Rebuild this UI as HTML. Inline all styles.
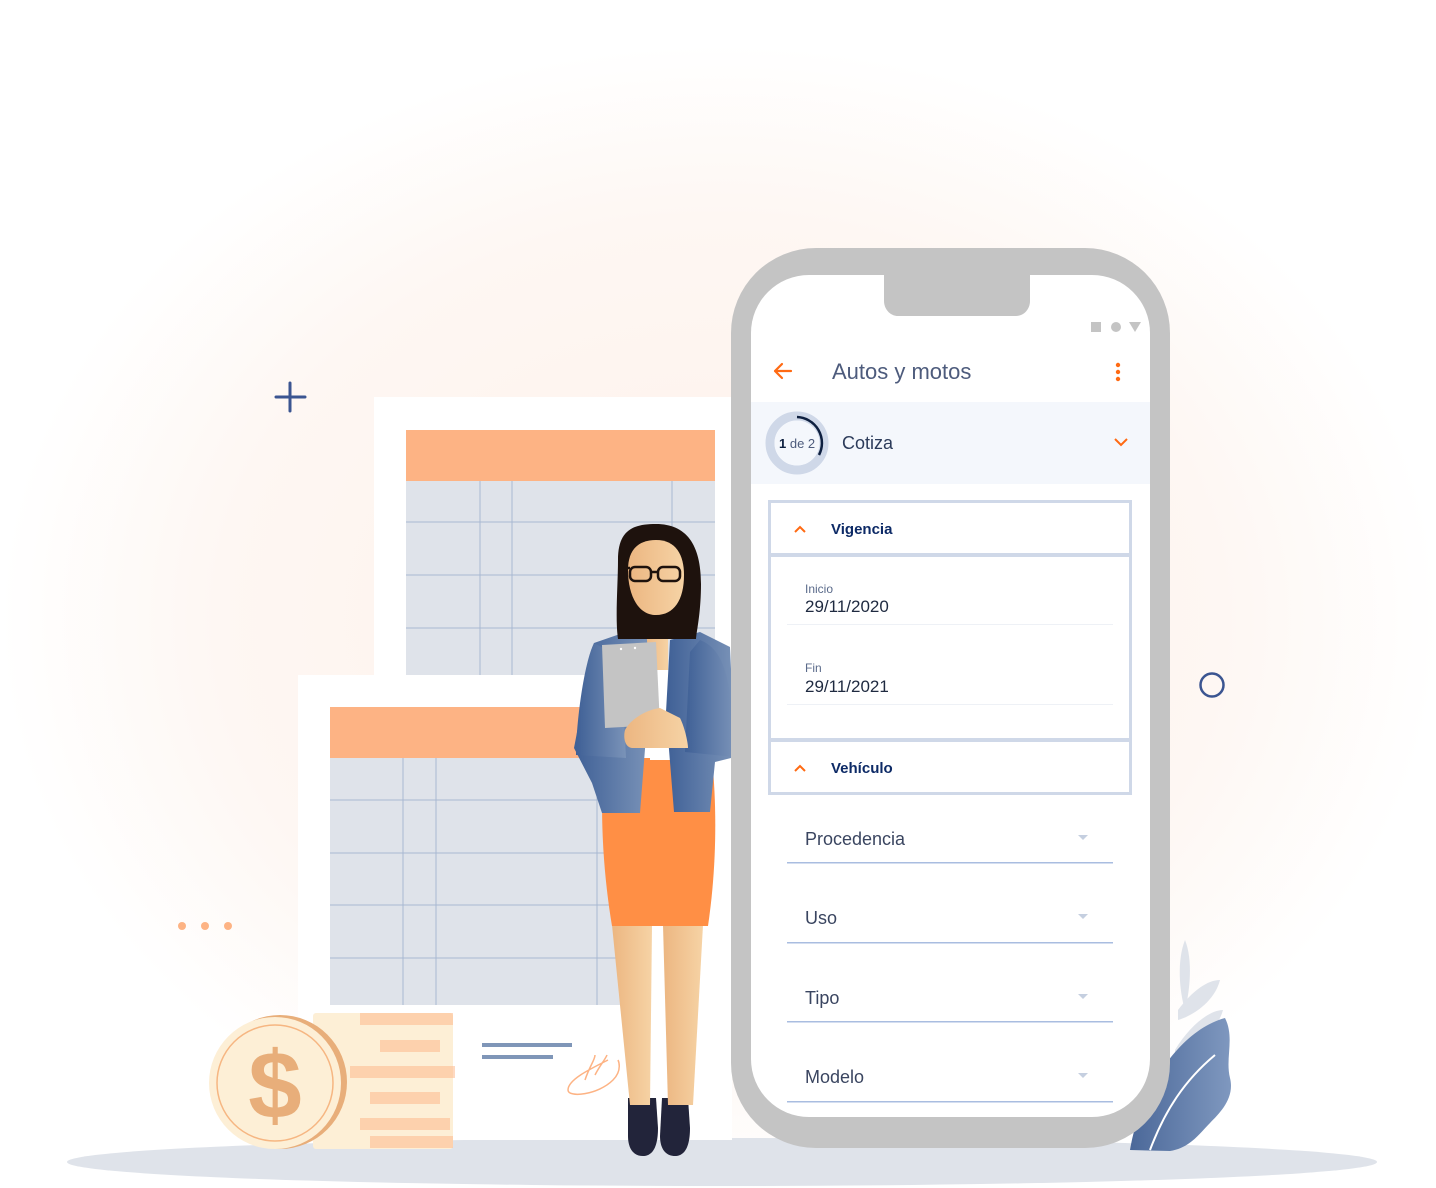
<!DOCTYPE html>
<html><head><meta charset="utf-8"><style>
html,body{margin:0;padding:0;width:1436px;height:1188px;overflow:hidden;background:#fff}
svg{display:block}
text{font-family:"Liberation Sans",sans-serif}
</style></head><body>
<svg width="1436" height="1188" viewBox="0 0 1436 1188" xmlns="http://www.w3.org/2000/svg">
<defs>
<radialGradient id="bg" cx="720" cy="620" r="720" gradientUnits="userSpaceOnUse" gradientTransform="translate(720 620) scale(1 0.8) translate(-720 -620)">
<stop offset="0" stop-color="#fdf1ea"/><stop offset="0.7" stop-color="#fef7f3"/><stop offset="1" stop-color="#ffffff"/></radialGradient>
<linearGradient id="jk" x1="0" x2="1"><stop offset="0" stop-color="#3f6096"/><stop offset="1" stop-color="#7a93b8"/></linearGradient>
<linearGradient id="sk" x1="0" x2="1"><stop offset="0" stop-color="#ecb681"/><stop offset="1" stop-color="#f6d3a5"/></linearGradient>
<linearGradient id="lf" x1="0" x2="1"><stop offset="0" stop-color="#4b6899"/><stop offset="1" stop-color="#7f98bf"/></linearGradient>
</defs>
<rect width="1436" height="1188" fill="url(#bg)"/>
<!-- ground -->
<ellipse cx="722" cy="1162" rx="655" ry="24" fill="#dfe3ea"/>
<!-- decorations -->
<path d="M276 397H305M290 383V411" stroke="#3b5591" stroke-width="3" stroke-linecap="round"/>
<circle cx="1212" cy="685" r="11.5" fill="none" stroke="#3b5591" stroke-width="2.5"/>
<circle cx="182" cy="926" r="4" fill="#fdb384"/><circle cx="205" cy="926" r="4" fill="#fdb384"/><circle cx="228" cy="926" r="4" fill="#fdb384"/>
<!-- leaves -->
<path d="M1185 940c-8 20-6 50 0 70c5-20 8-50 0-70z" fill="#dfe3ea"/>
<path d="M1178 1010c15-20 30-30 42-30c-5 20-25 35-42 40z" fill="#dfe3ea"/>
<path d="M1175 1050c15-25 35-40 48-40c-5 20-30 40-48 48z" fill="#dfe3ea"/>
<path d="M1130 1150c10-60 50-120 95-132c10 20 0 40 5 60c5 20-10 35-20 45c-10 10-20 25-40 28z" fill="url(#lf)"/>
<path d="M1150 1150c15-40 35-70 65-95" stroke="#fff" stroke-width="2" fill="none"/>
<!-- back doc -->
<rect x="374" y="397" width="357" height="278" fill="#fff"/>
<rect x="406" y="430" width="309" height="51" fill="#fdb384"/>
<rect x="406" y="481" width="309" height="194" fill="#dfe3ea"/>
<g stroke="#a8b8d2" stroke-width="1"><path d="M480 481V675M512 481V675M672 481V675M406 522H715M406 575H715M406 628H715"/></g>
<!-- front doc -->
<rect x="298" y="675" width="434" height="465" fill="#fff"/>
<rect x="330" y="707" width="290" height="51" fill="#fdb384"/>
<rect x="330" y="758" width="290" height="247" fill="#dfe3ea"/>
<g stroke="#a8b8d2" stroke-width="1"><path d="M403 758V1005M436 758V1005M597 758V1005M330 800H620M330 853H620M330 905H620M330 958H620"/></g>
<path d="M482 1045H572M482 1057H553" stroke="#7f96b8" stroke-width="4"/>
<path d="M608 1060c-20 10-40 20-40 30c0 8 30 5 45-10c10-10 5-20 5-20M585 1080c5-15 10-20 10-25M595 1075c5-10 10-15 12-20" stroke="#fdb384" stroke-width="1.5" fill="none"/>
<!-- coins -->
<rect x="313" y="1013" width="140" height="136" rx="3" fill="#fdefd6"/>
<g fill="#fdb384"><rect x="360" y="1013" width="93" height="12" opacity=".5"/><rect x="380" y="1040" width="60" height="12" opacity=".5"/><rect x="350" y="1066" width="105" height="12" opacity=".5"/><rect x="370" y="1092" width="70" height="12" opacity=".5"/><rect x="360" y="1118" width="90" height="12" opacity=".5"/><rect x="370" y="1136" width="83" height="12" opacity=".5"/></g>
<circle cx="280" cy="1082" r="67" fill="#e8ae7a"/>
<circle cx="275" cy="1083" r="66" fill="#fdefd6"/>
<circle cx="275" cy="1083" r="58" fill="none" stroke="#f6b682" stroke-width="1.5"/>
<text x="275" y="1118" text-anchor="middle" font-size="96" font-weight="bold" fill="#e8ae7a">$</text>
<!-- woman -->
<path d="M628 1098h28l2 30c0 20-6 28-15 28c-10 0-15-8-15-20z" fill="#22243a"/>
<path d="M662 1098h26l2 30c0 20-6 28-15 28c-10 0-15-8-15-20z" fill="#22243a"/>
<path d="M612 925h40l-2 180h-20z" fill="url(#sk)"/>
<path d="M663 925h40l-10 180h-25z" fill="url(#sk)"/>
<path d="M604 758h108c4 40 6 100-4 168h-96c-10-60-12-120-8-168z" fill="#ff8f45"/>
<path d="M644 600h24v75h-24z" fill="url(#sk)"/>
<rect x="650" y="670" width="20" height="90" fill="#fff"/>
<path d="M594 643l52-18l4 60l-10 128h-38l-10-30l-18-35z" fill="url(#jk)"/>
<path d="M670 640l30-8l30 15l5 110l-20 5l-5 50h-36l-8-100z" fill="url(#jk)"/>
<path d="M594 643c-10 20-18 80-18 112l50 3l-5-100z" fill="url(#jk)"/>
<path d="M700 640c25 10 32 40 35 117l-50-5l5-100z" fill="url(#jk)"/>
<path d="M618 560c0-30 15-36 38-36c30 0 45 20 45 60c0 30-5 50-5 55h-78c-3-20 0-55 0-79z" fill="#1e120d"/>
<path d="M628 570c0-20 10-30 28-30c20 0 28 15 28 35c0 25-10 40-28 40c-18 0-28-20-28-45z" fill="url(#sk)"/>
<g fill="none" stroke="#1e120d" stroke-width="2.5"><rect x="630" y="567" width="21" height="14" rx="5"/><rect x="658" y="567" width="22" height="14" rx="5"/><path d="M651 572h7M624 568h6"/></g>
<path d="M602 645l54-3l4 83l-55 3z" fill="#c4c4c4"/>
<circle cx="621" cy="649" r="1.2" fill="#fff"/><circle cx="635" cy="648" r="1.2" fill="#fff"/>
<path d="M625 730c5-10 20-20 35-22l20 10c5 10 8 25 8 30h-55c-8 0-10-10-8-18z" fill="url(#sk)"/>
<!-- phone -->
<rect x="731" y="248" width="439" height="900" rx="85" fill="#c4c4c4"/>
<rect x="751" y="275" width="399" height="842" rx="58" fill="#fff"/>
<path d="M884 275h146v26c0 8-6 15-14 15h-118c-8 0-14-7-14-15z" fill="#c4c4c4"/>
<rect x="1091" y="322" width="10" height="10" fill="#c4c4c4"/><circle cx="1116" cy="327" r="5" fill="#c4c4c4"/><path d="M1129 322h12l-6 10z" fill="#c4c4c4"/>
<path d="M791 371H775M782 364l-7 7l7 7" stroke="#ff6a13" stroke-width="2.2" fill="none" stroke-linecap="round" stroke-linejoin="round"/>
<text x="832" y="379" font-size="22" fill="#4d5b7c">Autos y motos</text>
<circle cx="1118" cy="365" r="2.2" fill="#ff6a13"/><circle cx="1118" cy="372" r="2.2" fill="#ff6a13"/><circle cx="1118" cy="379" r="2.2" fill="#ff6a13"/>
<rect x="751" y="402" width="399" height="82" fill="#f4f7fc"/>
<circle cx="797" cy="443" r="27" fill="none" stroke="#cfd8e8" stroke-width="9"/>
<circle cx="797" cy="443" r="22.5" fill="#f4f7fc"/>
<path d="M797 417a26 26 0 0 1 22 38" stroke="#0d1f3f" stroke-width="2.5" fill="none"/>
<text x="779" y="448" font-size="13" fill="#4d5b7c"><tspan fill="#0d1f3f" font-weight="bold">1</tspan> de 2</text>
<text x="842" y="449" font-size="18" fill="#2c3b5a">Cotiza</text>
<path d="M1115 439l6 6l6-6" stroke="#ff6a13" stroke-width="2" fill="none"/>
<!-- card -->
<rect x="769.5" y="501.5" width="361" height="292" fill="#fff" stroke="#cfd8e8" stroke-width="3"/>
<rect x="769" y="553" width="362" height="4" fill="#cfd8e8"/>
<rect x="769" y="738" width="362" height="4" fill="#cfd8e8"/>
<path d="M795 532l5-5l5 5" stroke="#ff6a13" stroke-width="2" fill="none"/>
<text x="831" y="534" font-size="15" font-weight="bold" fill="#0d2a66">Vigencia</text>
<text x="805" y="593" font-size="12" fill="#5a6a8a">Inicio</text>
<text x="805" y="612" font-size="17" fill="#1f2a40">29/11/2020</text>
<rect x="787" y="624" width="326" height="1" fill="#eef1f6"/>
<text x="805" y="672" font-size="12" fill="#5a6a8a">Fin</text>
<text x="805" y="692" font-size="17" fill="#1f2a40">29/11/2021</text>
<rect x="787" y="704" width="326" height="1" fill="#eef1f6"/>
<path d="M795 771l5-5l5 5" stroke="#ff6a13" stroke-width="2" fill="none"/>
<text x="831" y="773" font-size="15" font-weight="bold" fill="#0d2a66">Vehículo</text>
<g font-size="18" fill="#3a4560">
<text x="805" y="845">Procedencia</text><text x="805" y="924">Uso</text><text x="805" y="1004">Tipo</text><text x="805" y="1083">Modelo</text></g>
<g fill="#c5cfe0"><path d="M1078 835h10l-5 5z"/><path d="M1078 914h10l-5 5z"/><path d="M1078 994h10l-5 5z"/><path d="M1078 1073h10l-5 5z"/></g>
<g fill="#a9bde0"><rect x="787" y="862" width="326" height="1.5"/><rect x="787" y="942" width="326" height="1.5"/><rect x="787" y="1021" width="326" height="1.5"/><rect x="787" y="1101" width="326" height="1.5"/></g>
</svg>
</body></html>
